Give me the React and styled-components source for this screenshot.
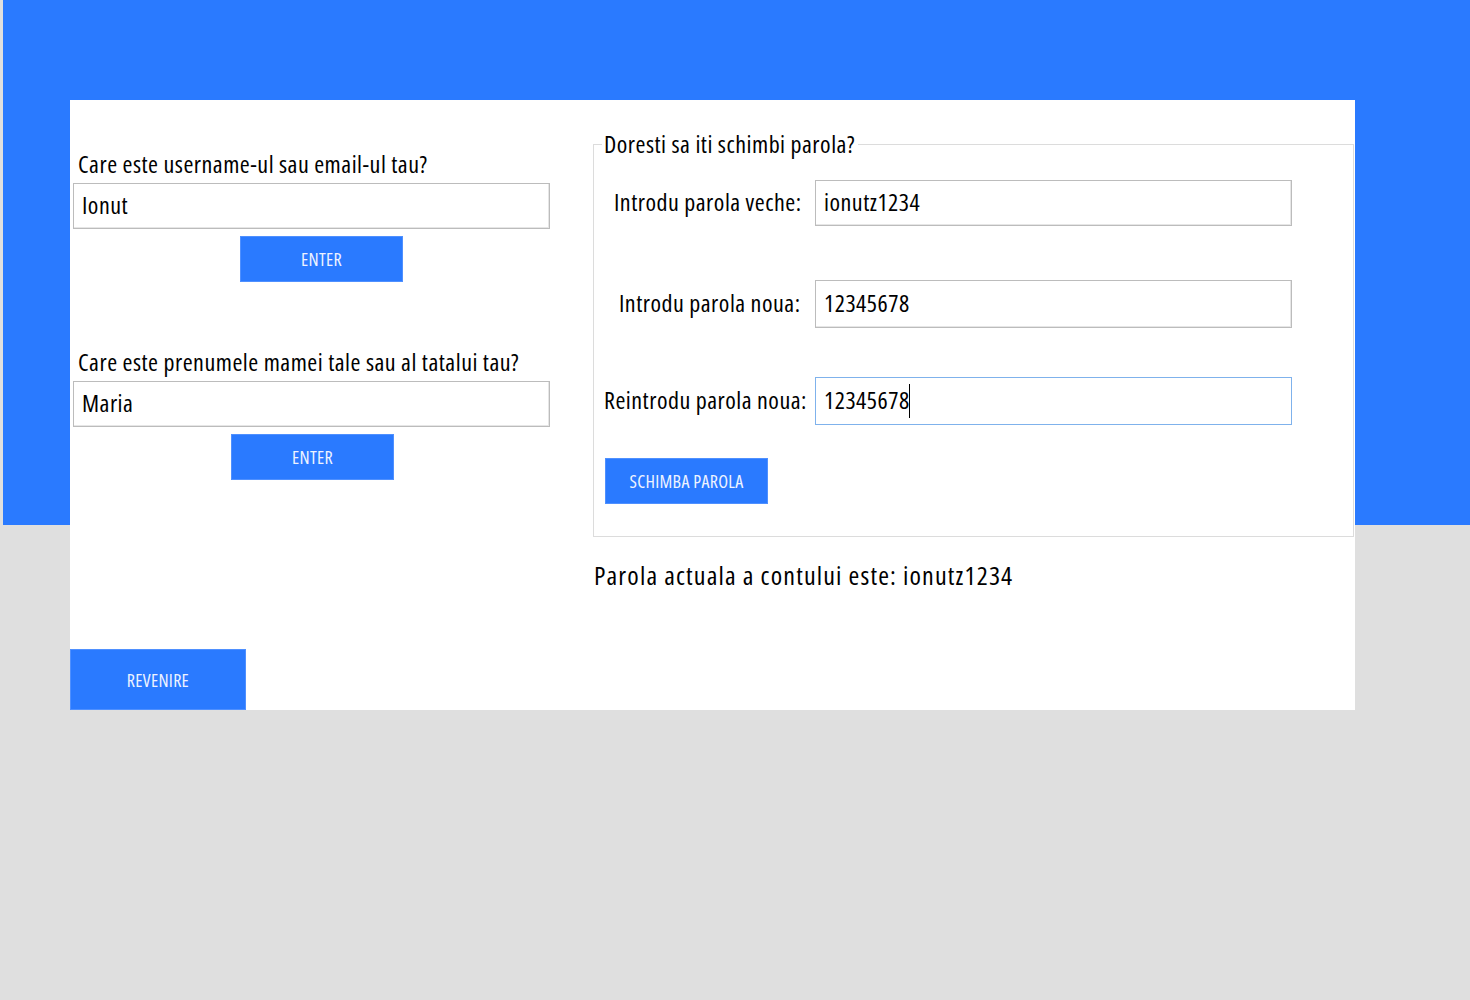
import React from 'react';
import styled, { createGlobalStyle } from 'styled-components';

const BLUE = '#2a7aff';

const GlobalStyle = createGlobalStyle`
  html, body {
    margin: 0;
    padding: 0;
    background: #dfdfdf;
    font-family: "Open Sans", "Noto Sans", sans-serif;
    font-stretch: 75%;
    color: #000;
  }
  * { box-sizing: border-box; }
`;

const Page = styled.div`
  min-height: 100vh;
  padding-left: 3px;
`;

const Banner = styled.div`
  height: 525px;
  background: ${BLUE};
  padding: 100px 0 0 67px;
`;

const Panel = styled.main`
  width: 1285px;
  height: 610px;
  background: #fff;
  display: flex;
  flex-direction: column;
`;

const Columns = styled.div`
  display: grid;
  grid-template-columns: 523px 762px;
`;

const LeftColumn = styled.section`
  display: flex;
  flex-direction: column;
  align-items: flex-start;
  padding: 50px 0 0 3px;
`;

const RightColumn = styled.section`
  display: flex;
  flex-direction: column;
  align-items: flex-start;
`;

const Question = styled.label`
  font-size: 24px;
  letter-spacing: 0.5px;
  line-height: 28px;
  margin: ${p => p.$top || 0}px 0 5px 5px;
  white-space: nowrap;
`;

const TextBox = styled.div`
  width: 477px;
  height: ${p => p.$h || 46}px;
  border: 1px solid ${p => (p.$focused ? '#7fb2ec' : '#bcbcbc')};
  box-shadow: ${p => (p.$focused ? 'none' : 'inset -1px -1px 0 #e6e6e6')};
  background: #fff;
  padding: 0 0 3px 8px;
  display: flex;
  align-items: center;
  font-size: 24px;
  letter-spacing: 0.5px;
  white-space: nowrap;
`;

const Caret = styled.span`
  display: inline-block;
  width: 1px;
  height: 34px;
  background: #000;
  margin: 3px 0 0 -1px;
`;

const Button = styled.button`
  width: ${p => p.$w || 163}px;
  height: ${p => p.$h || 46}px;
  margin: ${p => p.$top || 0}px 0 0 ${p => p.$left || 0}px;
  padding: 0;
  background: ${BLUE};
  border: 1px solid #4f90ff;
  color: #eef3ff;
  font-family: inherit;
  font-stretch: 75%;
  font-size: 18px;
  letter-spacing: 0.3px;
  cursor: pointer;
`;

const GroupBox = styled.fieldset`
  align-self: stretch;
  margin: 30px 1px 0 0;
  padding: 22px 0 32px 0;
  border: 1px solid #dcdcdc;
  min-width: 0;
`;

const Legend = styled.legend`
  font-size: 24px;
  letter-spacing: 0.5px;
  line-height: 28px;
  padding: 0 3px 0 2px;
  margin-left: 8px;
`;

const FieldRow = styled.div`
  display: grid;
  grid-template-columns: 221px 477px;
  align-items: center;
  margin-top: ${p => p.$top || 0}px;
`;

const FieldLabel = styled.label`
  font-size: 24px;
  letter-spacing: 0.5px;
  line-height: 28px;
  padding: 0 0 3px ${p => p.$indent || 0}px;
  white-space: nowrap;
`;

const Status = styled.p`
  margin: 23px 0 0 1px;
  font-size: 26px;
  letter-spacing: 1.15px;
  line-height: 30px;
  white-space: nowrap;
`;

const Footer = styled.footer`
  margin-top: auto;
  display: flex;
`;

export default function App() {
  return (
    <>
      <GlobalStyle />
      <Page>
        <Banner>
          <Panel>
            <Columns>
              <LeftColumn>
                <Question>Care este username-ul sau email-ul tau?</Question>
                <TextBox>Ionut</TextBox>
                <Button $top={7} $left={167}>ENTER</Button>
                <Question $top={66}>Care este prenumele mamei tale sau al tatalui tau?</Question>
                <TextBox>Maria</TextBox>
                <Button $top={7} $left={158}>ENTER</Button>
              </LeftColumn>
              <RightColumn>
                <GroupBox>
                  <Legend>Doresti sa iti schimbi parola?</Legend>
                  <FieldRow>
                    <FieldLabel $indent={20}>Introdu parola veche:</FieldLabel>
                    <TextBox $h={46}>ionutz1234</TextBox>
                  </FieldRow>
                  <FieldRow $top={54}>
                    <FieldLabel $indent={25}>Introdu parola noua:</FieldLabel>
                    <TextBox $h={48}>12345678</TextBox>
                  </FieldRow>
                  <FieldRow $top={49}>
                    <FieldLabel $indent={10}>Reintrodu parola noua:</FieldLabel>
                    <TextBox $h={48} $focused>
                      12345678<Caret />
                    </TextBox>
                  </FieldRow>
                  <Button $top={33} $left={11}>SCHIMBA PAROLA</Button>
                </GroupBox>
                <Status>Parola actuala a contului este: ionutz1234</Status>
              </RightColumn>
            </Columns>
            <Footer>
              <Button $w={176} $h={61}>REVENIRE</Button>
            </Footer>
          </Panel>
        </Banner>
      </Page>
    </>
  );
}
